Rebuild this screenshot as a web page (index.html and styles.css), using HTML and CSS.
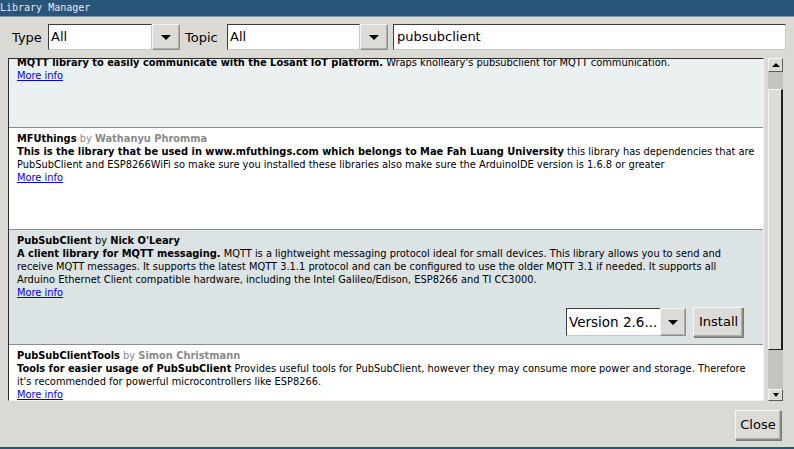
FILE: index.html
```html
<!DOCTYPE html>
<html>
<head>
<meta charset="utf-8">
<link rel="stylesheet" href="styles.css">
</head>
<body>
<div class="window">
  <div class="titlebar">Library Manager</div>
  <div class="filters">
    <span class="label label-type">Type</span>
    <div class="combo combo-type">
      <div class="field">All</div>
      <div class="drop"><span class="tri-down"></span></div>
    </div>
    <span class="label label-topic">Topic</span>
    <div class="combo combo-topic">
      <div class="field">All</div>
      <div class="drop"><span class="tri-down"></span></div>
    </div>
    <div class="search">pubsubclient</div>
  </div>
  <div class="main">
    <div class="list">
      <div class="scroller">
        <div class="entry tint">
          <p class="lines"><span class="name">Losant Arduino MQTT Client</span> <span class="by">by</span> <span class="author">Losant</span><br><b>MQTT library to easily communicate with the Losant IoT platform.</b> Wraps knolleary's pubsubclient for MQTT communication.<br><a href="#">More info</a></p>
          <div class="actions hidden"><div class="combo combo-ver"><div class="field">Version 1.0.0</div><div class="drop"><span class="tri-down"></span></div></div><div class="btn">Install</div></div>
        </div>
        <div class="entry">
          <p class="lines"><span class="name">MFUthings</span> <span class="by">by</span> <span class="author">Wathanyu Phromma</span><br><b>This is the library that be used in www.mfuthings.com which belongs to Mae Fah Luang University</b> this library has dependencies that are<br>PubSubClient and ESP8266WiFi so make sure you installed these libraries also make sure the ArduinoIDE version is 1.6.8 or greater<br><a href="#">More info</a></p>
          <div class="actions hidden"><div class="combo combo-ver"><div class="field">Version 1.0.0</div><div class="drop"><span class="tri-down"></span></div></div><div class="btn">Install</div></div>
        </div>
        <div class="entry hover">
          <p class="lines"><span class="name">PubSubClient</span> <span class="by">by</span> <span class="author">Nick O'Leary</span><br><b>A client library for MQTT messaging.</b> MQTT is a lightweight messaging protocol ideal for small devices. This library allows you to send and<br>receive MQTT messages. It supports the latest MQTT 3.1.1 protocol and can be configured to use the older MQTT 3.1 if needed. It supports all<br>Arduino Ethernet Client compatible hardware, including the Intel Galileo/Edison, ESP8266 and TI CC3000.<br><a href="#">More info</a></p>
          <div class="actions"><div class="combo combo-ver"><div class="field">Version 2.6...</div><div class="drop"><span class="tri-down"></span></div></div><div class="btn">Install</div></div>
        </div>
        <div class="entry">
          <p class="lines"><span class="name">PubSubClientTools</span> <span class="by">by</span> <span class="author">Simon Christmann</span><br><b>Tools for easier usage of PubSubClient</b> Provides useful tools for PubSubClient, however they may consume more power and storage. Therefore<br>it's recommended for powerful microcontrollers like ESP8266.<br><a href="#">More info</a></p>
        </div>
      </div>
    </div>
    <div class="scrollbar">
      <div class="sb-btn"><span class="tri-up-sm"></span></div>
      <div class="sb-track sb-track-top"></div>
      <div class="sb-thumb"></div>
      <div class="sb-track sb-track-bottom"></div>
      <div class="sb-btn"><span class="tri-down-sm"></span></div>
    </div>
  </div>
  <div class="footer">
    <div class="btn btn-close">Close</div>
  </div>
  <div class="bottombar"></div>
</div>
</body>
</html>
```

FILE: styles.css
```css
* { box-sizing: border-box; }
html, body { margin: 0; padding: 0; }
body {
  background: #dad9d4;
  font-family: "DejaVu Sans", sans-serif;
  color: #000;
  overflow: hidden;
}
.window {
  width: 794px;
  height: 449px;
  display: flex;
  flex-direction: column;
}
.titlebar {
  height: 17px;
  background: #29557a;
  border-bottom: 1px solid #7f96ab;
  color: #e6e9ec;
  font-family: "DejaVu Sans Mono", monospace;
  font-size: 10px;
  line-height: 15px;
  padding-left: 0;
}
.filters {
  display: flex;
  align-items: center;
  height: 26px;
  margin-top: 7px;
  padding-left: 12px;
  font-size: 13px;
}
.label { flex: none; }
.label-type { width: 36px; }
.label-topic { width: 47px; padding-left: 5px; }
.combo {
  display: flex;
  height: 26px;
}
.field {
  background: #fff;
  border-top: 1px solid #3c3c3c;
  border-left: 1px solid #3c3c3c;
  border-bottom: 1px solid #c8c8c4;
  border-right: 1px solid #c8c8c4;
  padding-left: 2px;
  line-height: 24px;
  white-space: nowrap;
  overflow: hidden;
}
.combo-type .field { width: 104px; }
.combo-topic .field { width: 133px; }
.drop {
  width: 28px;
  background: #dcdbd7;
  border: 1px solid #8e8e8a;
  border-top-color: #f4f4f2;
  border-left-color: #f4f4f2;
  box-shadow: inset -1px -1px 0 #b0afab;
  display: flex;
  align-items: center;
  justify-content: center;
}
.tri-down {
  width: 0; height: 0;
  border-left: 5px solid transparent;
  border-right: 5px solid transparent;
  border-top: 5px solid #000;
}
.search {
  margin-left: 5px;
  width: 393px;
  height: 26px;
  background: #fff;
  border-top: 1px solid #3c3c3c;
  border-left: 1px solid #3c3c3c;
  border-bottom: 1px solid #c8c8c4;
  border-right: 1px solid #c8c8c4;
  padding-left: 3px;
  line-height: 24px;
}
.main {
  display: flex;
  margin-top: 8px;
  margin-left: 8px;
  height: 343px;
}
.list {
  width: 756px;
  height: 343px;
  background: #fff;
  border-top: 1px solid #2a2a2a;
  border-left: 1px solid #2a2a2a;
  border-right: 1px solid #f2f2f0;
  border-bottom: 1px solid #f2f2f0;
  overflow: hidden;
}
.scroller { margin-top: -20px; }
.entry {
  padding: 4px 20px 7px 8px;
  border-bottom: 1px solid #8d8d8d;
  background: #fff;
  font-size: 9.85px;
}
.entry.tint { background: #ebf0f0; }
.entry.hover { background: #dbe3e4; }
.lines {
  margin: 0;
  line-height: 13px;
  white-space: nowrap;
}
.name { font-weight: bold; }
.by { color: #8a8a8a; }
.author { color: #8a8a8a; font-weight: bold; }
.hover .by { color: #000; }
.hover .author { color: #000; }
.lines a { color: #0000ee; text-decoration: underline; }
.actions {
  margin-top: 8px;
  height: 30px;
  display: flex;
  justify-content: flex-end;
  align-items: center;
  gap: 7px;
}
.actions.hidden { visibility: hidden; }
.combo-ver { height: 28px; font-size: 13.5px; }
.combo-ver .field { width: 94px; line-height: 26px; padding-left: 2px; border-right: none; }
.combo-ver .drop { width: 26px; }
.btn {
  height: 30px;
  padding: 0 5px;
  background: #dcdbd7;
  border: 1px solid #8e8e8a;
  border-top-color: #f6f6f4;
  border-left-color: #f6f6f4;
  box-shadow: inset -1px -1px 0 #b0afab, 1px 1px 0 #7a7a76;
  font-size: 13px;
  line-height: 28px;
  text-align: center;
}
.actions .btn { width: 50px; }
.scrollbar {
  margin-left: 4px;
  width: 15px;
  height: 343px;
  display: flex;
  flex-direction: column;
  background: #c4c3bf;
}
.sb-btn {
  height: 14px;
  background: #dcdbd7;
  border: 1px solid #5a5a58;
  border-top-color: #f4f4f2;
  border-left-color: #f4f4f2;
  display: flex;
  align-items: center;
  justify-content: center;
}
.sb-btn:last-child { height: 12px; }
.tri-up-sm {
  width: 0; height: 0;
  border-left: 4px solid transparent;
  border-right: 4px solid transparent;
  border-bottom: 4px solid #000;
}
.tri-down-sm {
  width: 0; height: 0;
  border-left: 3px solid transparent;
  border-right: 3px solid transparent;
  border-top: 4px solid #000;
}
.sb-track { background: #c4c3bf; }
.sb-track-top { height: 17px; }
.sb-track-bottom { height: 39px; }
.sb-thumb {
  height: 261px;
  background: #dcdbd7;
  border-left: 1px solid #f4f4f2;
  border-top: 1px solid #f4f4f2;
  border-right: 2px solid #1e1e1e;
  border-bottom: 1px solid #1e1e1e;
}
.footer {
  display: flex;
  justify-content: flex-end;
  padding-right: 13px;
  margin-top: 9px;
  height: 37px;
}
.btn-close { width: 46px; padding: 0; }
.bottombar {
  height: 2px;
  background: #29557a;
}
```
